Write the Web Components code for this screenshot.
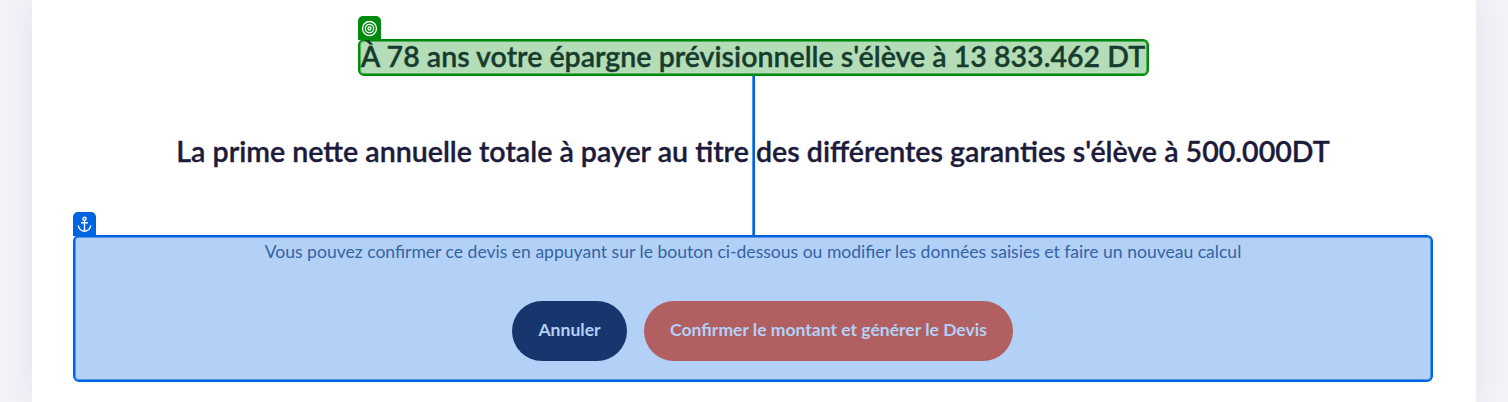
<!DOCTYPE html>
<html lang="fr"><head><meta charset="utf-8"><style>body{margin:0}</style></head><body><quote-page></quote-page>
<script>
const def=(name,html)=>customElements.define(name,class extends HTMLElement{constructor(){super();this.attachShadow({mode:'open'}).innerHTML=html}});
def('picked-box',`<style>
:host{display:block;position:relative;box-sizing:border-box;border:2px solid var(--line);background:var(--fill);border-radius:6px;box-shadow:inset 0 0 0 1px var(--soft)}
.tag{position:absolute;left:-2px;top:-25px;width:23px;height:24px;background:var(--line);border-radius:5px 5px 0 0;display:flex;align-items:center;justify-content:center}
</style><span class="tag"><slot name="icon"></slot></span><slot></slot>`);
def('pill-button',`<style>:host{display:flex;box-sizing:border-box;height:60px;padding-bottom:3px;align-items:center;justify-content:center;border-radius:30px;font-weight:700;font-size:17.55px;color:#b3d1f6}</style><slot></slot>`);
def('quote-page',`<style>
:host{display:block;height:402px;overflow:hidden;background:#f3f4fa;font-family:Lato,sans-serif;padding:0 32px}
main{box-sizing:border-box;height:402px;background:#fff;box-shadow:0 0 35px rgba(60,50,80,.09);padding:39px 43px 0 41px;display:flex;flex-direction:column;position:relative}
.a{align-self:center;width:791px;height:37px;--line:#008a0e;--soft:#008a0e88;--fill:#b3dcb7;color:#163c2d}
.t{font-size:28.57px;line-height:30px;font-weight:600;-webkit-text-stroke:.35px currentColor;text-align:center;white-space:nowrap}
.a .t{margin:0 -4px}
h2{margin:60px 0 0;color:#1c1b3b}
.b{margin-top:69px;height:147px;--line:#0063e0;--soft:#0063e088;--fill:#b3d1f6;text-align:center}
p{margin:4px 0 0;font-size:17.56px;line-height:22px;color:#3464a4}
.row{display:flex;justify-content:center;gap:17px;margin-top:38px;padding-left:19px}
.line{position:absolute;left:720px;top:76px;width:3px;height:160px;background:linear-gradient(90deg,#0063e0aa 1px,#0063e0 1px)}
</style><main><picked-box class="a"><svg slot="icon" width="17" height="17" viewBox="0 0 17 17" fill="none" stroke="#fff" stroke-width="1.3"><circle cx="8.5" cy="8.5" r="7"/><circle cx="8.5" cy="8.5" r="4.2"/><circle cx="8.5" cy="8.5" r="1.5"/></svg><div class="t">À 78 ans votre épargne prévisionnelle s'élève à 13 833.462 DT</div></picked-box>
<h2 class="t">La prime nette annuelle totale à payer au titre des différentes garanties s'élève à 500.000DT</h2>
<picked-box class="b"><svg slot="icon" width="17" height="17" viewBox="0 0 17 17" fill="none" stroke="#fff" stroke-width="1.4"><circle cx="8.500" cy="2.800" r="1.600"/><path d="M8.500 4.500V15.500M5 6.800h7M2.300 9.500c.4 3.800 3 5.300 6.200 5.900c3.200-.6 5.800-2.100 6.200-5.900"/></svg><p>Vous pouvez confirmer ce devis en appuyant sur le bouton ci-dessous ou modifier les données saisies et faire un nouveau calcul</p>
<div class="row"><pill-button style="width:115px;background:#17366e">Annuler</pill-button><pill-button style="width:369px;background:#b25f62">Confirmer le montant et générer le Devis</pill-button></div></picked-box><i class="line"></i></main>`);
</script></body></html>
